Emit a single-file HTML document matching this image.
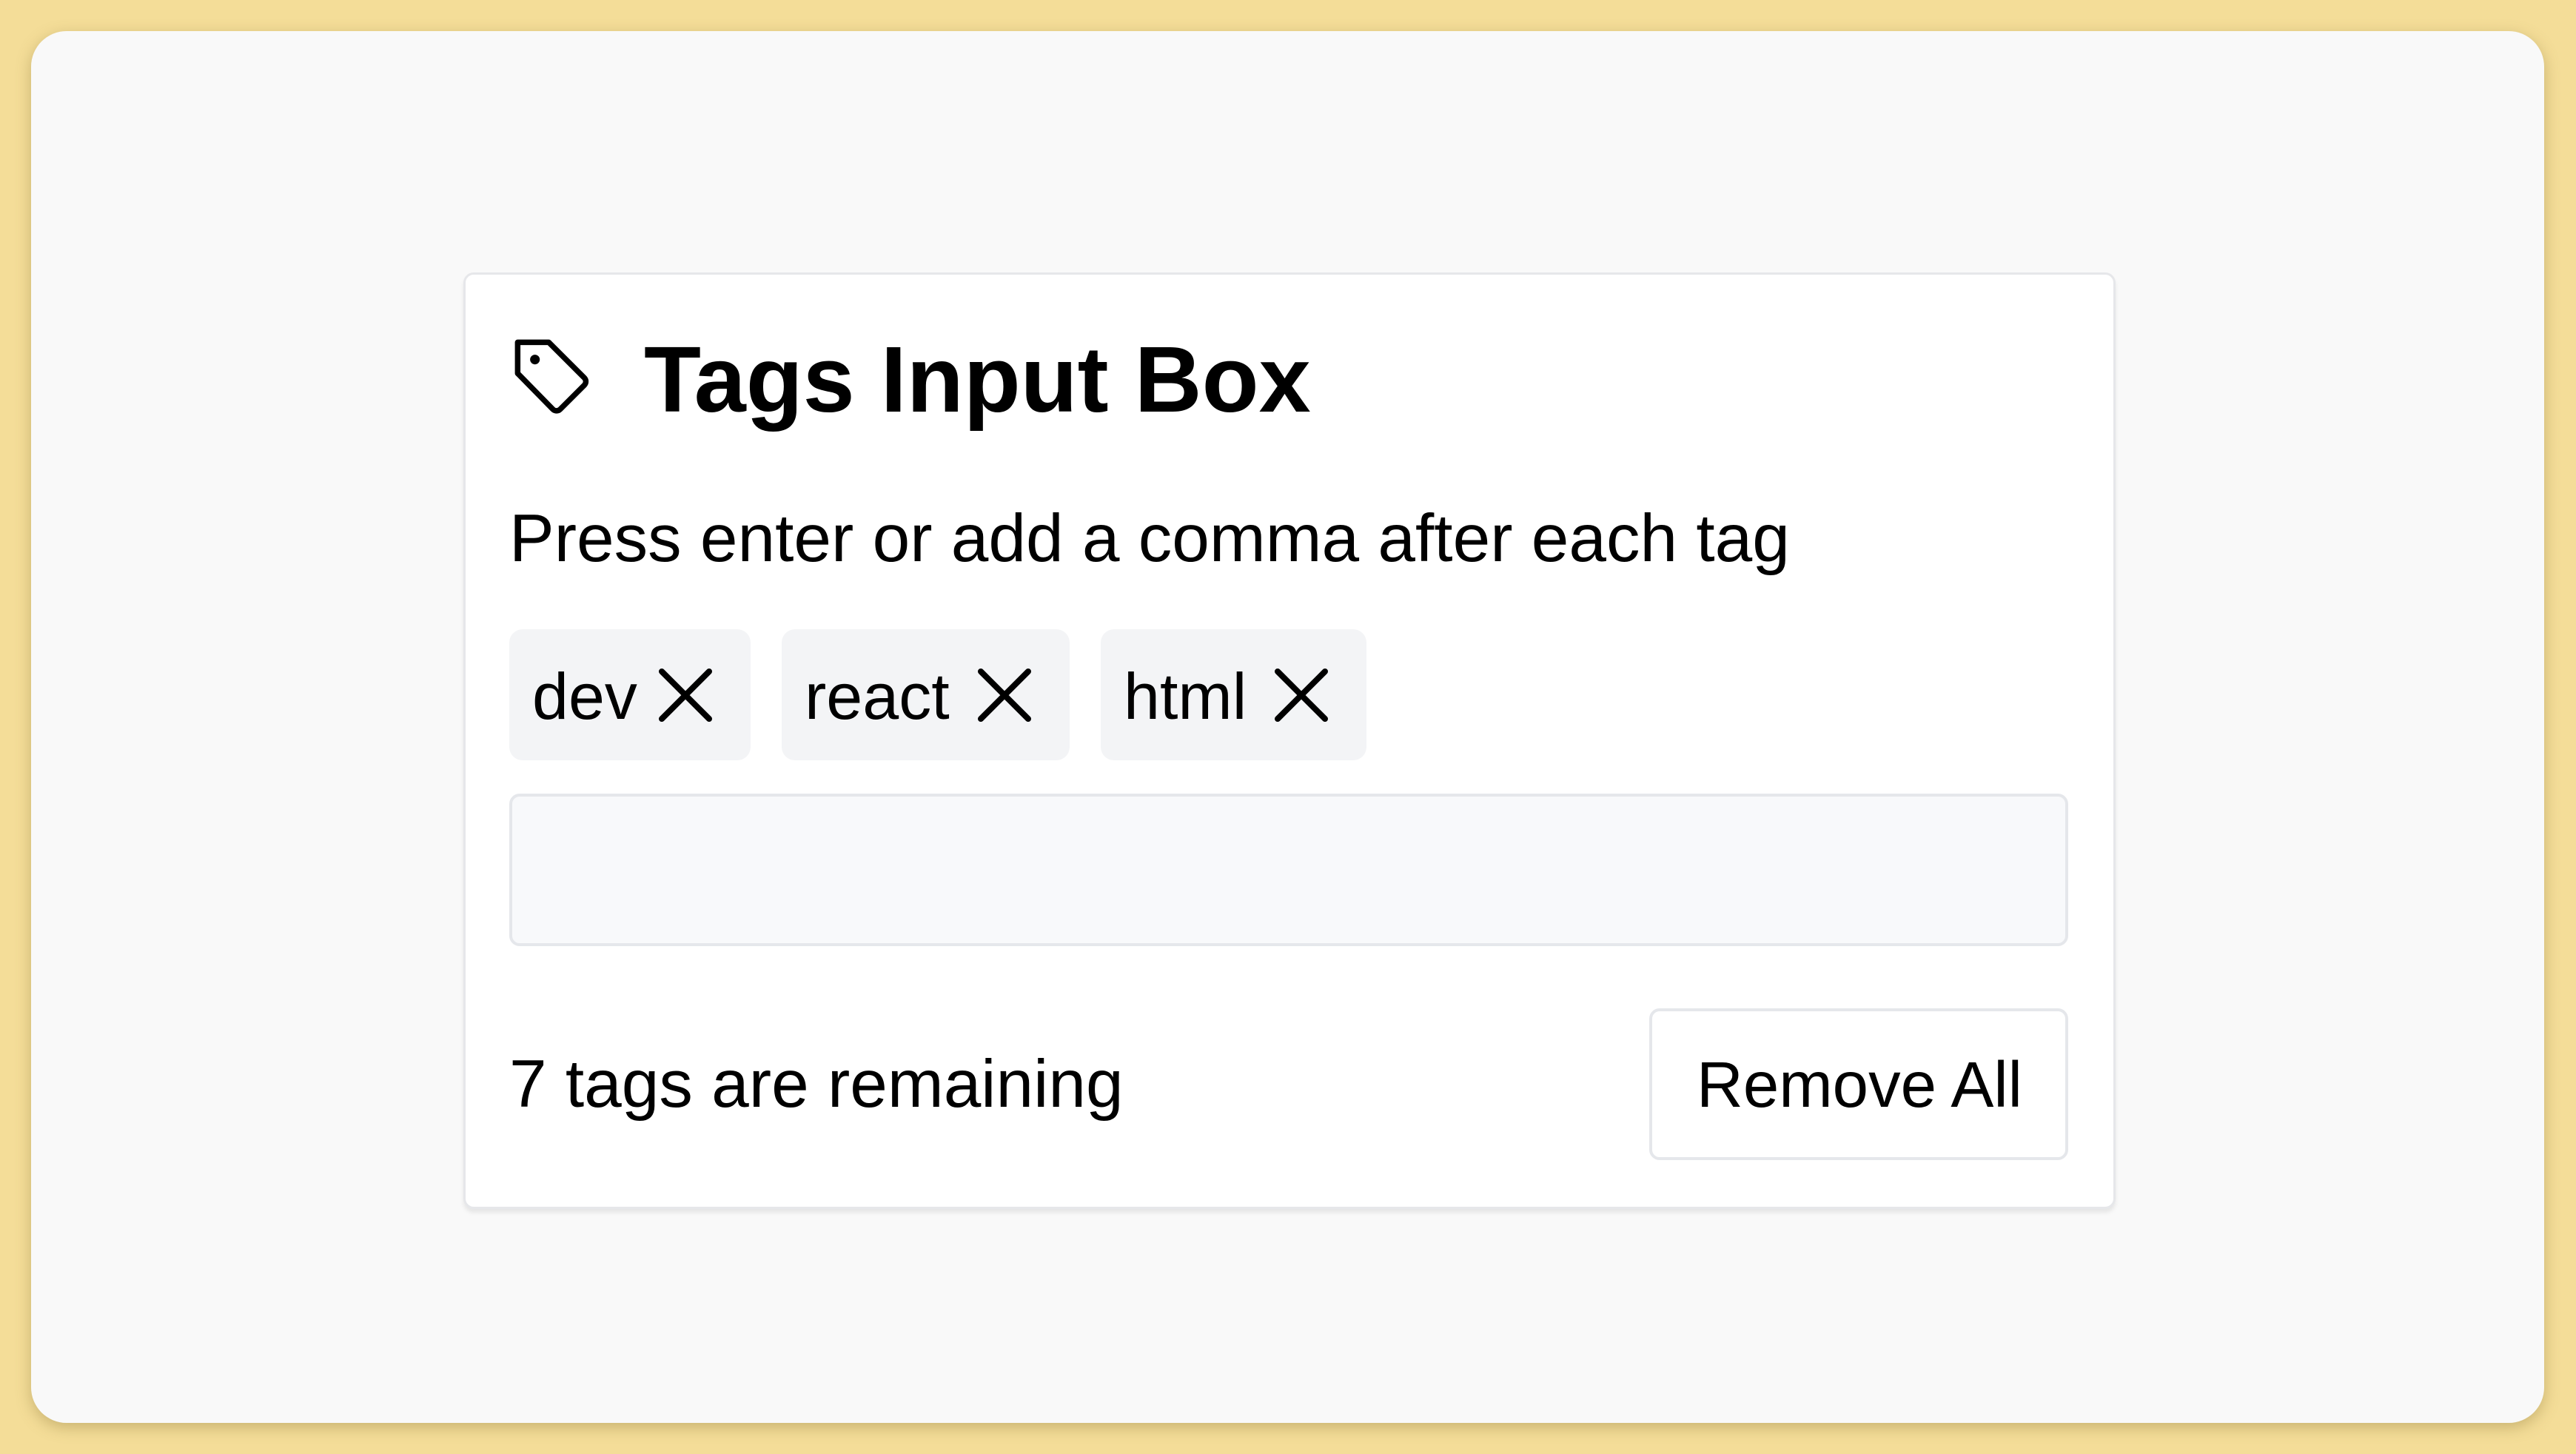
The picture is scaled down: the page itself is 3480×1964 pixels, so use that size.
<!DOCTYPE html>
<html><head><meta charset="utf-8"><style>
*{margin:0;padding:0;box-sizing:border-box}
body{width:3480px;height:1964px;background:#f4dd98;position:relative;overflow:hidden;font-family:"Liberation Sans",sans-serif;color:#000}
.panel{position:absolute;left:42px;top:42px;width:3395px;height:1880px;background:#f9f9f9;border-radius:48px;box-shadow:0 6px 20px rgba(120,100,40,.35)}
.card{position:absolute;left:626px;top:368px;width:2232px;height:1265px;background:#fff;border:3px solid #e6e7ea;border-radius:14px;box-shadow:0 5px 6px rgba(0,0,0,.08)}
.t{position:absolute;white-space:nowrap;line-height:1}
.tag{position:absolute;top:850px;height:177px;background:#f3f4f6;border-radius:18px}
.input{position:absolute;left:688px;top:1072px;width:2106px;height:206px;background:#f8f9fb;border:4px solid #e5e7eb;border-radius:14px}
.btn{position:absolute;left:2228px;top:1362px;width:566px;height:205px;background:#fff;border:4px solid #e5e7eb;border-radius:14px}
svg{position:absolute}
</style></head><body>
<div class="panel"></div>
<div class="card"></div>
<svg style="left:690px;top:453px" width="112" height="112" viewBox="0 0 24 24" fill="none" stroke="#000" stroke-width="1.6" stroke-linejoin="round" stroke-linecap="round"><path d="M2 2h9l10.3 10.3a1.5 1.5 0 0 1 0 2.1l-7 7a1.5 1.5 0 0 1-2.1 0L2 11z"/><circle cx="7" cy="7" r="0.6" fill="#000"/></svg>
<div class="t" style="left:870px;top:450px;font-size:126px;font-weight:bold">Tags Input Box</div>
<div class="t" style="left:688px;top:682px;font-size:91px">Press enter or add a comma after each tag</div>
<div class="tag" style="left:688px;width:326px"></div>
<div class="tag" style="left:1056px;width:389px"></div>
<div class="tag" style="left:1487px;width:359px"></div>
<div class="t" style="left:719px;top:897px;font-size:88px">dev</div>
<div class="t" style="left:1087px;top:897px;font-size:88px">react</div>
<div class="t" style="left:1518px;top:897px;font-size:88px">html</div>
<svg style="left:890px;top:903px" width="72" height="72" viewBox="0 0 72 72" stroke="#000" stroke-width="8" stroke-linecap="round"><path d="M4 4L68 68M68 4L4 68"/></svg>
<svg style="left:1321px;top:903px" width="72" height="72" viewBox="0 0 72 72" stroke="#000" stroke-width="8" stroke-linecap="round"><path d="M4 4L68 68M68 4L4 68"/></svg>
<svg style="left:1722px;top:903px" width="72" height="72" viewBox="0 0 72 72" stroke="#000" stroke-width="8" stroke-linecap="round"><path d="M4 4L68 68M68 4L4 68"/></svg>
<div class="input"></div>
<div class="t" style="left:688px;top:1419px;font-size:91px">7 tags are remaining</div>
<div class="btn"></div>
<div class="t" style="left:2292px;top:1422px;font-size:87px">Remove All</div>
</body></html>
